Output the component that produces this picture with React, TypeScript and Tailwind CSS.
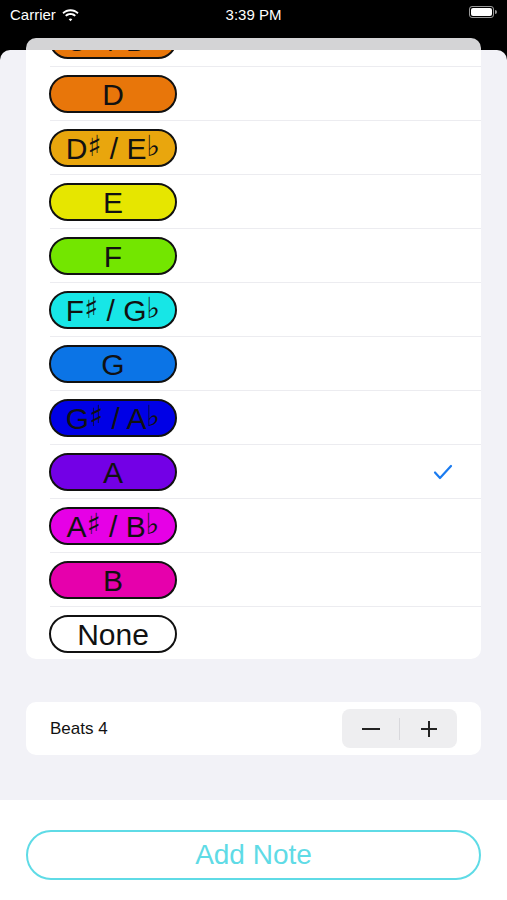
import React from "react";

interface Note { label: React.ReactNode; bg: string }

const notes: Note[] = [
  { label: <>C<Acc>♯</Acc> / D<Acc>♭</Acc></>, bg: "bg-[#e8760a]" },
  { label: "D", bg: "bg-[#e8760a]" },
  { label: <>D<Acc>♯</Acc> / E<Acc>♭</Acc></>, bg: "bg-[#e9a60d]" },
  { label: "E", bg: "bg-[#e6e600]" },
  { label: "F", bg: "bg-[#73e600]" },
  { label: <>F<Acc>♯</Acc> / G<Acc>♭</Acc></>, bg: "bg-[#17e6e6]" },
  { label: "G", bg: "bg-[#0b74e6]" },
  { label: <>G<Acc>♯</Acc> / A<Acc>♭</Acc></>, bg: "bg-[#0000e6]" },
  { label: "A", bg: "bg-[#7300e6]" },
  { label: <>A<Acc>♯</Acc> / B<Acc>♭</Acc></>, bg: "bg-[#e600e6]" },
  { label: "B", bg: "bg-[#e600ac]" },
  { label: "None", bg: "bg-white" },
];

function Acc({ children }: { children: React.ReactNode }) {
  return <span className="text-[29px] relative -top-[3px] font-bold font-['DejaVu_Sans',sans-serif]">{children}</span>;
}

function StatusBar() {
  return (
    <div className="h-[38px] flex items-start justify-between px-[10px] pt-[4px] text-white text-[15px] font-['Liberation_Sans',sans-serif]">
      <div className="flex items-center gap-[6px] w-[120px]">
        <span>Carrier</span>
        <svg width="17" height="13" viewBox="0 0 17 13" fill="white">
          <path d="M8.5 2.2c2.6 0 5 1 6.8 2.7l1.3-1.4C14.4 1.4 11.6.2 8.5.2S2.6 1.4.4 3.5l1.3 1.4C3.5 3.2 5.9 2.2 8.5 2.2z" />
          <path d="M8.5 6c1.6 0 3 .6 4.1 1.6l1.3-1.4C12.5 4.9 10.6 4 8.5 4S4.5 4.9 3.1 6.2l1.3 1.4C5.5 6.6 6.9 6 8.5 6z" />
          <path d="M8.5 9.6c.7 0 1.3.3 1.8.7L8.5 12.3 6.7 10.3c.5-.4 1.1-.7 1.8-.7z" />
        </svg>
      </div>
      <span className="font-medium">3:39 PM</span>
      <div className="w-[120px] flex justify-end pt-[2px]">
        <div className="flex items-center gap-[1px]">
          <div className="w-[25px] h-[12px] rounded-[3px] border border-white/60 p-[1px]">
            <div className="w-full h-full rounded-[2px] bg-white" />
          </div>
          <div className="w-[2px] h-[4px] rounded-r bg-white/60" />
        </div>
      </div>
    </div>
  );
}

export default function App() {
  return (
    <div className="w-[507px] h-[900px] bg-black flex flex-col overflow-hidden font-['Liberation_Sans',sans-serif]">
      <StatusBar />
      <div className="mx-[26px] h-[12px] rounded-t-[10px] bg-[#d4d4d6]" />
      <div className="flex-1 flex flex-col bg-[#f2f2f7] rounded-t-[10px] overflow-hidden">
        <div className="px-[26px] flex flex-col">
          <div className="h-[609px] bg-white rounded-b-[10px] overflow-hidden">
            <div className="-mt-[37px]">
              {notes.map((n, i) => (
                <div key={i} className="h-[54px] pl-[23px] flex items-center relative">
                  <div className={`w-[128px] h-[38px] rounded-full border-2 border-[#111] ${n.bg} flex items-center justify-center text-[30px] leading-none text-[#111] whitespace-nowrap`}>
                    <span className="relative top-[1px]">{n.label}</span>
                  </div>
                  {i === 8 && (
                    <svg className="absolute right-[28px] top-[19px]" width="20" height="16" viewBox="0 0 20 16" fill="none" stroke="#1a7bf0" strokeWidth="2.2" strokeLinecap="round" strokeLinejoin="round">
                      <path d="M2 8.5l5 5.5L18 2" />
                    </svg>
                  )}
                  {i < notes.length - 1 && <div className="absolute left-[24px] right-0 bottom-0 h-px bg-[#ececf0]" />}
                </div>
              ))}
            </div>
          </div>
          <div className="mt-[43px] h-[53px] bg-white rounded-[10px] flex items-center justify-between pl-[24px] pr-[24px]">
            <span className="text-[17px] text-[#111]">Beats 4</span>
            <div className="w-[115px] h-[39px] rounded-[8px] bg-[#eeeef0] flex items-center">
              <div className="flex-1 flex items-center justify-center">
                <div className="w-[18px] h-[2px] bg-[#222]" />
              </div>
              <div className="w-px h-[22px] bg-[#d8d8dc]" />
              <div className="flex-1 flex items-center justify-center">
                <svg width="18" height="18" viewBox="0 0 18 18" stroke="#222" strokeWidth="2">
                  <path d="M9 1v16M1 9h16" />
                </svg>
              </div>
            </div>
          </div>
        </div>
        <div className="flex-1" />
        <div className="h-[100px] bg-white px-[26px] pt-[30px]">
          <div className="h-[50px] rounded-full border-2 border-[#5fdbe6] flex items-center justify-center text-[28px] text-[#5fdbe6]">
            Add Note
          </div>
        </div>
      </div>
    </div>
  );
}
